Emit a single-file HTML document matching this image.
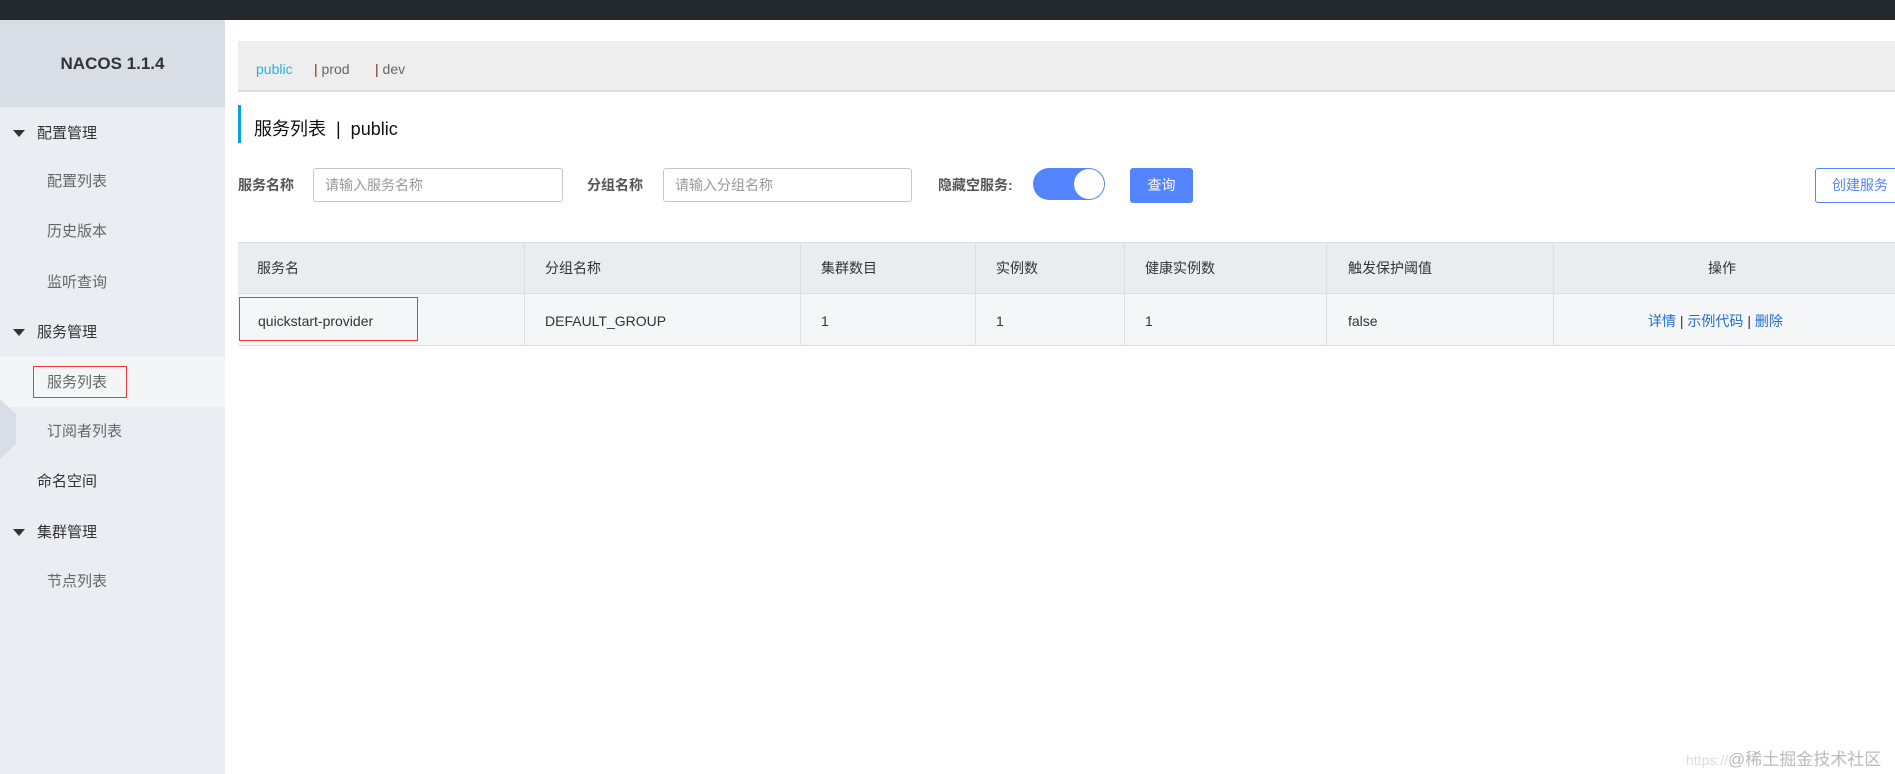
<!DOCTYPE html>
<html><head><meta charset="utf-8"><style>
*{margin:0;padding:0;box-sizing:border-box}
body{width:1895px;height:774px;overflow:hidden;background:#fff;font-family:"Liberation Sans","Noto Sans CJK SC",sans-serif;color:#333;position:relative}
.a{position:absolute;white-space:nowrap}
.top{left:0;top:0;width:1895px;height:20px;background:#24292e}
.side{left:0;top:20px;width:225px;height:754px;background:#eaedf1}
.logo{left:0;top:20px;width:225px;height:87px;background:#d9dee6;font-weight:bold;font-size:17px;text-align:center;line-height:87px;color:#333}
.mi{font-size:15px;color:#333;line-height:20px}
.ch{font-size:15px;color:#666;line-height:20px}
.tri{width:0;height:0;border-left:6px solid transparent;border-right:6px solid transparent;border-top:7px solid #333}
.ns{left:238px;top:41px;width:1657px;height:51px;background:#eee;border-bottom:2px solid #ddd}
.lab{font-size:14px;font-weight:bold;color:#555;line-height:20px}
.inp{border:1px solid #c4c6cf;border-radius:3px;height:34px;font-size:14px;color:#999;padding-left:11px;line-height:32px}
.th{font-size:14px;color:#333;line-height:20px}
.vl{position:absolute;top:242px;width:1px;height:104px;background:#dcdee3}
</style></head><body>
<div class="a top"></div>
<div class="a side"></div>
<div class="a logo">NACOS 1.1.4</div>
<div class="a" style="left:0;top:357px;width:225px;height:50px;background:#f4f5f7"></div>
<div class="a" style="left:0;top:399px;width:16px;height:60px;background:#d9dee6;clip-path:polygon(0 0,100% 25%,100% 75%,0 100%)"></div>

<div class="a tri" style="left:13px;top:130px"></div><div class="a mi" style="left:37px;top:124px">配置管理</div>
<div class="a ch" style="left:47px;top:172px">配置列表</div>
<div class="a ch" style="left:47px;top:222px">历史版本</div>
<div class="a ch" style="left:47px;top:273px">监听查询</div>
<div class="a tri" style="left:13px;top:329px"></div><div class="a mi" style="left:37px;top:323px">服务管理</div>
<div class="a ch" style="left:47px;top:373px">服务列表</div>
<div class="a" style="left:33px;top:366px;width:94px;height:32px;border:1px solid #f03a3a"></div>
<div class="a ch" style="left:47px;top:422px">订阅者列表</div>
<div class="a mi" style="left:37px;top:472px">命名空间</div>
<div class="a tri" style="left:13px;top:529px"></div><div class="a mi" style="left:37px;top:523px">集群管理</div>
<div class="a ch" style="left:47px;top:572px">节点列表</div>

<div class="a ns"></div>
<div class="a" style="left:256px;top:61px;font-size:14px;color:#1fb6e0">public</div>
<div class="a" style="left:314px;top:61px;font-size:14px;color:#666"><span style="color:#7a2a1a">|</span> prod</div>
<div class="a" style="left:375px;top:61px;font-size:14px;color:#666"><span style="color:#7a2a1a">|</span> dev</div>

<div class="a" style="left:238px;top:105px;width:3px;height:38px;background:#0aa0dc"></div>
<div class="a" style="left:254px;top:117px;font-size:18px;color:#111;line-height:24px">服务列表 &nbsp;|&nbsp; public</div>

<div class="a lab" style="left:238px;top:175px">服务名称</div>
<div class="a inp" style="left:313px;top:168px;width:250px">请输入服务名称</div>
<div class="a lab" style="left:587px;top:175px">分组名称</div>
<div class="a inp" style="left:663px;top:168px;width:249px">请输入分组名称</div>
<div class="a lab" style="left:938px;top:175px">隐藏空服务:</div>
<div class="a" style="left:1033px;top:168px;width:72px;height:32px;border-radius:16px;background:#5584ff"></div>
<div class="a" style="left:1074px;top:169px;width:30px;height:30px;border-radius:50%;background:#fff"></div>
<div class="a" style="left:1130px;top:168px;width:63px;height:35px;border-radius:3px;background:#5584ff;color:#fff;font-size:14px;text-align:center;line-height:35px">查询</div>
<div class="a" style="left:1815px;top:168px;width:100px;height:35px;border:1px solid #5584ff;border-radius:3px;color:#5584ff;font-size:14px;line-height:33px;padding-left:16px">创建服务</div>

<div class="a" style="left:238px;top:242px;width:1657px;height:52px;background:#ebecf0;border-top:1px solid #dcdee3;border-bottom:1px solid #dcdee3"></div>
<div class="a" style="left:238px;top:294px;width:1657px;height:52px;background:#f5f6f8;border-bottom:1px solid #dcdee3"></div>
<div class="vl" style="left:524px"></div><div class="vl" style="left:800px"></div><div class="vl" style="left:975px"></div><div class="vl" style="left:1124px"></div><div class="vl" style="left:1326px"></div><div class="vl" style="left:1553px"></div>
<div class="a th" style="left:257px;top:258px">服务名</div>
<div class="a th" style="left:545px;top:258px">分组名称</div>
<div class="a th" style="left:821px;top:258px">集群数目</div>
<div class="a th" style="left:996px;top:258px">实例数</div>
<div class="a th" style="left:1145px;top:258px">健康实例数</div>
<div class="a th" style="left:1348px;top:258px">触发保护阈值</div>
<div class="a th" style="left:1708px;top:258px">操作</div>
<div class="a th" style="left:258px;top:311px">quickstart-provider</div>
<div class="a" style="left:239px;top:297px;width:179px;height:44px;border:1px solid #f03a3a"></div>
<div class="a th" style="left:545px;top:311px">DEFAULT_GROUP</div>
<div class="a th" style="left:821px;top:311px">1</div>
<div class="a th" style="left:996px;top:311px">1</div>
<div class="a th" style="left:1145px;top:311px">1</div>
<div class="a th" style="left:1348px;top:311px">false</div>
<div class="a th" style="left:1648px;top:311px;color:#1f6fd0">详情 <span style="color:#333">|</span> 示例代码 <span style="color:#333">|</span> 删除</div>

<div class="a" style="left:1686px;top:745px;font-size:17px;color:#bbb"><span style="font-size:14px;color:#ddd">https://</span>@稀土掘金技术社区</div>
</body></html>
